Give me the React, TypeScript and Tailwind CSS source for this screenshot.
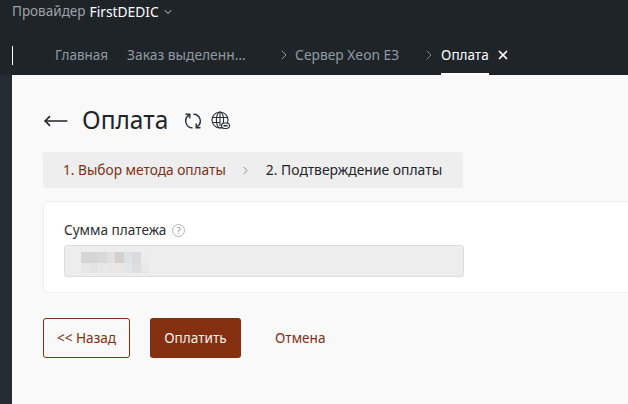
import React from 'react';
import { ChevronDown, ChevronRight, X, MoveLeft } from 'lucide-react';

const row1 = ['bg-[#d5d5d5]', 'bg-[#d5d5d5]', 'bg-[#d9d9d9]', 'bg-[#e1e1e1]', 'bg-[#d3d1ce]', 'bg-[#dfe2e4]', 'bg-[#d9dbdc]', 'bg-[#ececec]'];
const row2 = ['bg-[#e6e6e6]', 'bg-[#e3e3e3]', 'bg-[#e8e8e8]', 'bg-[#e7e7e7]', 'bg-[#e8e7e5]', 'bg-[#e3e6e8]', 'bg-[#dcdedf]', 'bg-[#e8e8e8]'];

const App: React.FC = () => {
  return (
    <div className="w-[628px] h-[404px] overflow-hidden flex flex-col bg-[#f9f9f9] font-['Noto_Sans',sans-serif]">
      {/* Header */}
      <div className="h-[75px] shrink-0 bg-[#1f2428] flex flex-col">
        <div className="h-[23px] pl-3 flex items-center text-[13.5px] leading-none text-[#9aa3ab]">
          <span>Провайдер</span>
          <span className="ml-1 text-[13.8px] text-white">FirstDEDIC</span>
          <ChevronDown className="ml-[3px] w-3 h-3 text-[#d0d4d8]" strokeWidth={2} />
        </div>
        <div className="flex-1 flex items-end relative">
          <div className="absolute left-3 top-[23px] w-px h-[19px] bg-white" />
          <div className="h-[32px] ml-[55px] flex items-start text-[13.5px] text-[#8f9aa3]">
            <span className="h-[24px] flex items-center">Главная</span>
            <span className="h-[24px] flex items-center ml-[19px] w-[149px] text-[13.8px]">Заказ выделенн…</span>
            <ChevronRight className="w-4 h-4 mt-[4px] text-[#8f9aa3]" strokeWidth={1.5} />
            <span className="h-[24px] flex items-center ml-[3px] w-[126px] text-[13.8px]">Сервер Xeon E3</span>
            <ChevronRight className="w-4 h-4 mt-[4px] text-[#7d858c]" strokeWidth={1.5} />
            <div className="ml-1 h-[32px] flex flex-col">
              <span className="h-[24px] flex items-center text-white">Оплата</span>
              <span className="mt-auto h-[2px] bg-white" />
            </div>
            <X className="ml-[7px] mt-[5px] w-[14px] h-[14px] text-white" strokeWidth={3} />
          </div>
        </div>
      </div>

      <div className="flex-1 flex min-h-0">
        {/* Sidebar strip */}
        <div className="w-3 shrink-0 bg-[#232b33]" />

        {/* Main */}
        <div className="flex-1 pl-[31px] min-w-0">
          <div className="h-[77px] flex items-center pt-[14px]">
            <MoveLeft className="w-[26px] h-[26px] text-[#1f2428]" strokeWidth={1.5} />
            <h1 className="ml-[13px] text-[24.5px] leading-none font-normal text-[#1f2428]">Оплата</h1>
            <svg className="ml-[16px] w-[18px] h-[18px] text-[#2b3036]" viewBox="0 0 18 18" fill="none" stroke="currentColor" strokeWidth="1.4">
              <path d="M8.5 15.8A6.8 6.8 0 0 1 5 3.2" />
              <path d="M1.5 2.3L5.8 2.3L5.8 6.6" />
              <path d="M9.5 2.2A6.8 6.8 0 0 1 13 14.8" />
              <path d="M16.5 15.7L12.2 15.7L12.2 11.4" />
            </svg>
            <svg className="ml-[9px] w-[19px] h-[19px] text-[#2b3036]" viewBox="0 0 19 19" fill="none" stroke="currentColor" strokeWidth="1.1">
              <circle cx="9" cy="9" r="8" />
              <ellipse cx="9" cy="9" rx="3.6" ry="8" />
              <path d="M1.5 6.5h15M1.5 11.5h8M9 1v14" />
              <rect x="10.5" y="12" width="8" height="5.5" rx="2.7" fill="#f9f9f9" />
              <path d="M12.5 14.7h4" strokeWidth="1.6" />
            </svg>
          </div>

          <div className="w-[420px] h-9 rounded-[3px] bg-[#eeeeee] flex items-center pl-5 text-[13.7px] leading-none">
            <span className="text-[#7f2f12]">1. Выбор метода оплаты</span>
            <ChevronRight className="ml-[13px] w-[13px] h-[13px] text-[#777]" strokeWidth={1.5} />
            <span className="ml-[14px] text-[13.9px] text-[#1f2428]">2. Подтверждение оплаты</span>
          </div>

          <div className="mt-[13px] w-[640px] h-[92px] bg-white rounded-l-[5px] border border-[#eeeeee] pl-5 pt-[18px]">
            <div className="flex items-center h-[20px] text-[13.6px] leading-none text-[#2b3036]">
              <span>Сумма платежа</span>
              <span className="ml-[6px] w-[13px] h-[13px] rounded-full border border-[#b5b5b5] text-[#8a8a8a] text-[9px] leading-none flex items-center justify-center">?</span>
            </div>
            <div className="mt-[5px] w-[400px] h-[32px] rounded-[3px] bg-[#ededed] border border-[#dddddd] pl-4 pt-[6px]">
              <div className="flex">
                {row1.map((c, i) => (
                  <div key={i} className={`w-[8.5px] h-[11px] ${c}`} />
                ))}
              </div>
              <div className="flex">
                {row2.map((c, i) => (
                  <div key={i} className={`w-[8.5px] h-[10px] ${c}`} />
                ))}
              </div>
            </div>
          </div>

          <div className="mt-[25px] flex items-center text-[13.6px] leading-none">
            <button className="w-[87px] h-10 rounded-[3px] border border-[#832f10] text-[#7f2f12]">&lt;&lt; Назад</button>
            <button className="ml-5 w-[91px] h-10 rounded-[3px] bg-[#832f10] text-[#f5f0ee]">Оплатить</button>
            <button className="ml-[34px] text-[#7f2f12]">Отмена</button>
          </div>
        </div>
      </div>
    </div>
  );
};

export default App;
